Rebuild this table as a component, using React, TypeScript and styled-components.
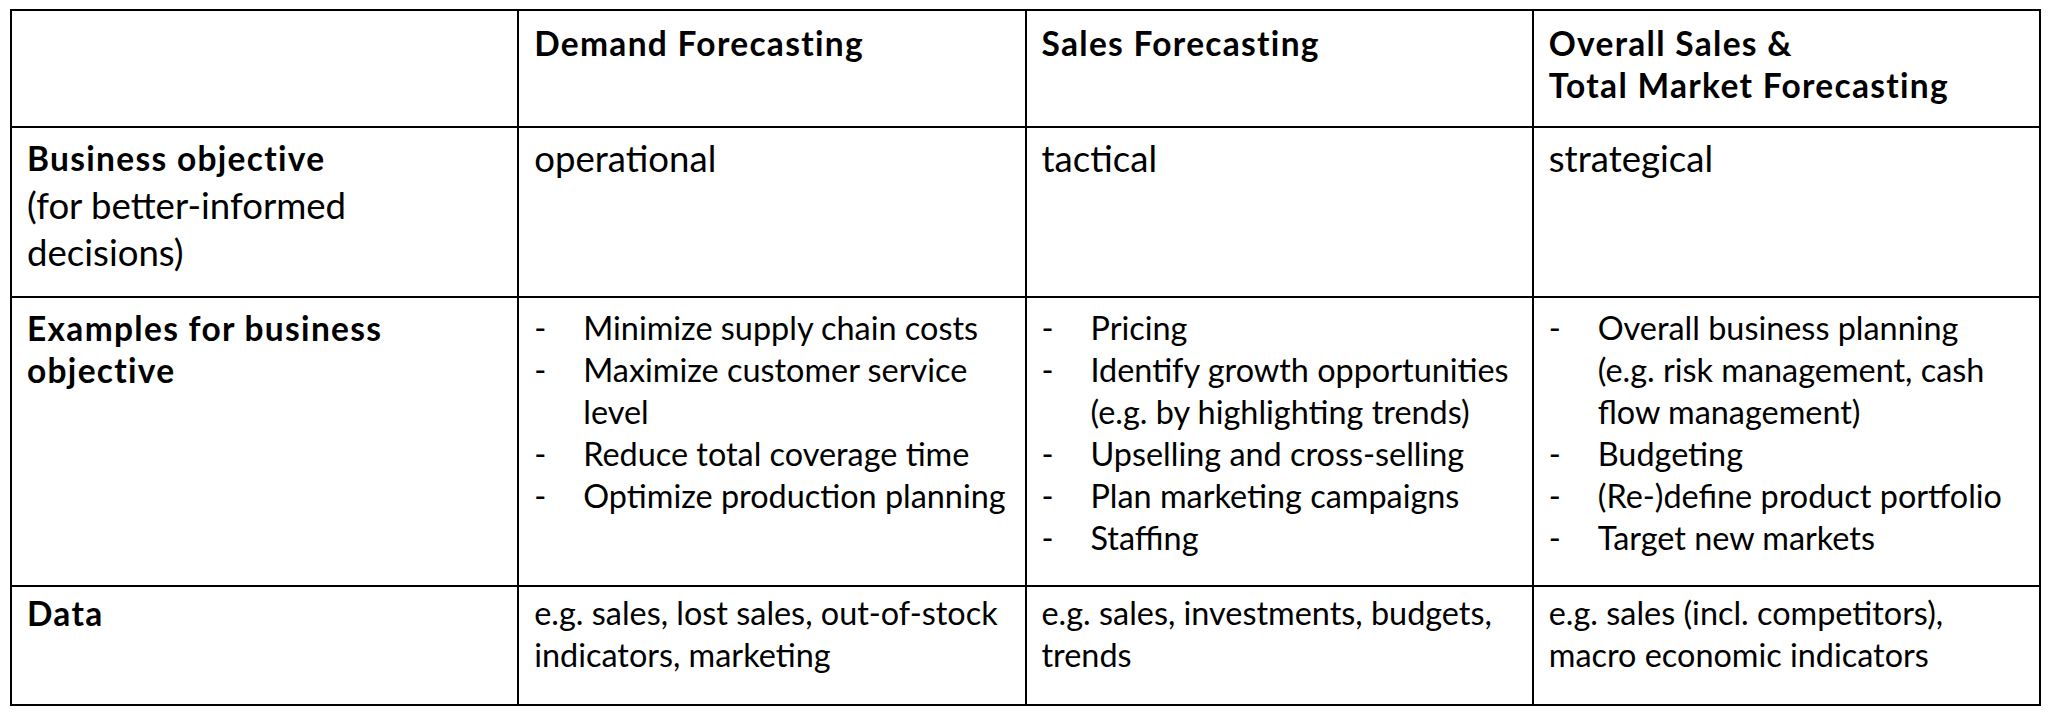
import React from "react";
import styled, { createGlobalStyle } from "styled-components";

const GlobalStyle = createGlobalStyle`
  html, body {
    margin: 0;
    padding: 0;
    background: #fff;
  }
  body {
    font-family: Lato, "Open Sans", "Liberation Sans", sans-serif;
    color: #000;
  }
`;

const Page = styled.div`
  padding: 9px 0 0 10px;
`;

const Table = styled.div`
  width: 2031px;
  display: grid;
  grid-template-columns: repeat(4, 1fr);
  grid-template-rows: 115px 168px 287px 117px;
  gap: 2px;
  padding: 2px;
  box-sizing: border-box;
  background: #000;
`;

const Cell = styled.div<{ $top: number }>`
  background: #fff;
  padding: ${(p) => p.$top}px 10px 0 15px;
  font-size: 32.4px;
  line-height: 42px;
  white-space: nowrap;
  overflow: hidden;
`;

const Strong = styled.div`
  font-weight: 700;
  font-size: 33.5px;
  letter-spacing: 1.3px;
`;

const Plain = styled.div`
  font-weight: 400;
`;

// the objective row is set a size up in the source sheet
const Big = styled.div<{ $lh?: number; $gap?: number }>`
  font-weight: 400;
  font-size: 36.6px;
  line-height: ${(p) => p.$lh ?? 42}px;
  margin-top: ${(p) => p.$gap ?? 0}px;
`;

const List = styled.ul`
  list-style: none;
  margin: 0;
  padding: 0;
`;

const Item = styled.li`
  display: grid;
  grid-template-columns: 49px 1fr;
  &::before {
    content: "-";
  }
`;

// "\n" marks a line break as in the source sheet
const lines = (text: string) =>
  text.split("\n").map((l, i, all) => (
    <React.Fragment key={i}>
      {l}
      {i < all.length - 1 && <br />}
    </React.Fragment>
  ));

const bullets = (items: string[]) => (
  <List>
    {items.map((t) => (
      <Item key={t}>
        <span>{lines(t)}</span>
      </Item>
    ))}
  </List>
);

type Row = {
  top: number;
  cells: React.ReactNode[];
};

const rows: Row[] = [
  {
    top: 11,
    cells: [
      null,
      <Strong>Demand Forecasting</Strong>,
      <Strong>Sales Forecasting</Strong>,
      <Strong>{lines("Overall Sales &\nTotal Market Forecasting")}</Strong>,
    ],
  },
  {
    top: 9,
    cells: [
      <>
        <Strong>Business objective</Strong>
        <Big $lh={47} $gap={3}>
          {lines("(for better-informed\ndecisions)")}
        </Big>
      </>,
      <Big>operational</Big>,
      <Big>tactical</Big>,
      <Big>strategical</Big>,
    ],
  },
  {
    top: 9,
    cells: [
      <Strong>{lines("Examples for business\nobjective")}</Strong>,
      bullets([
        "Minimize supply chain costs",
        "Maximize customer service\nlevel",
        "Reduce total coverage time",
        "Optimize production planning",
      ]),
      bullets([
        "Pricing",
        "Identify growth opportunities\n(e.g. by highlighting trends)",
        "Upselling and cross-selling",
        "Plan marketing campaigns",
        "Staffing",
      ]),
      bullets([
        "Overall business planning\n(e.g. risk management, cash\nflow management)",
        "Budgeting",
        "(Re-)define product portfolio",
        "Target new markets",
      ]),
    ],
  },
  {
    top: 5,
    cells: [
      <Strong>Data</Strong>,
      <Plain>{lines("e.g. sales, lost sales, out-of-stock\nindicators, marketing")}</Plain>,
      <Plain>{lines("e.g. sales, investments, budgets,\ntrends")}</Plain>,
      <Plain>{lines("e.g. sales (incl. competitors),\nmacro economic indicators")}</Plain>,
    ],
  },
];

export default function App() {
  return (
    <>
      <GlobalStyle />
      <Page>
        <Table>
          {rows.map((row, r) =>
            row.cells.map((c, i) => (
              <Cell key={`${r}-${i}`} $top={row.top}>
                {c}
              </Cell>
            ))
          )}
        </Table>
      </Page>
    </>
  );
}
